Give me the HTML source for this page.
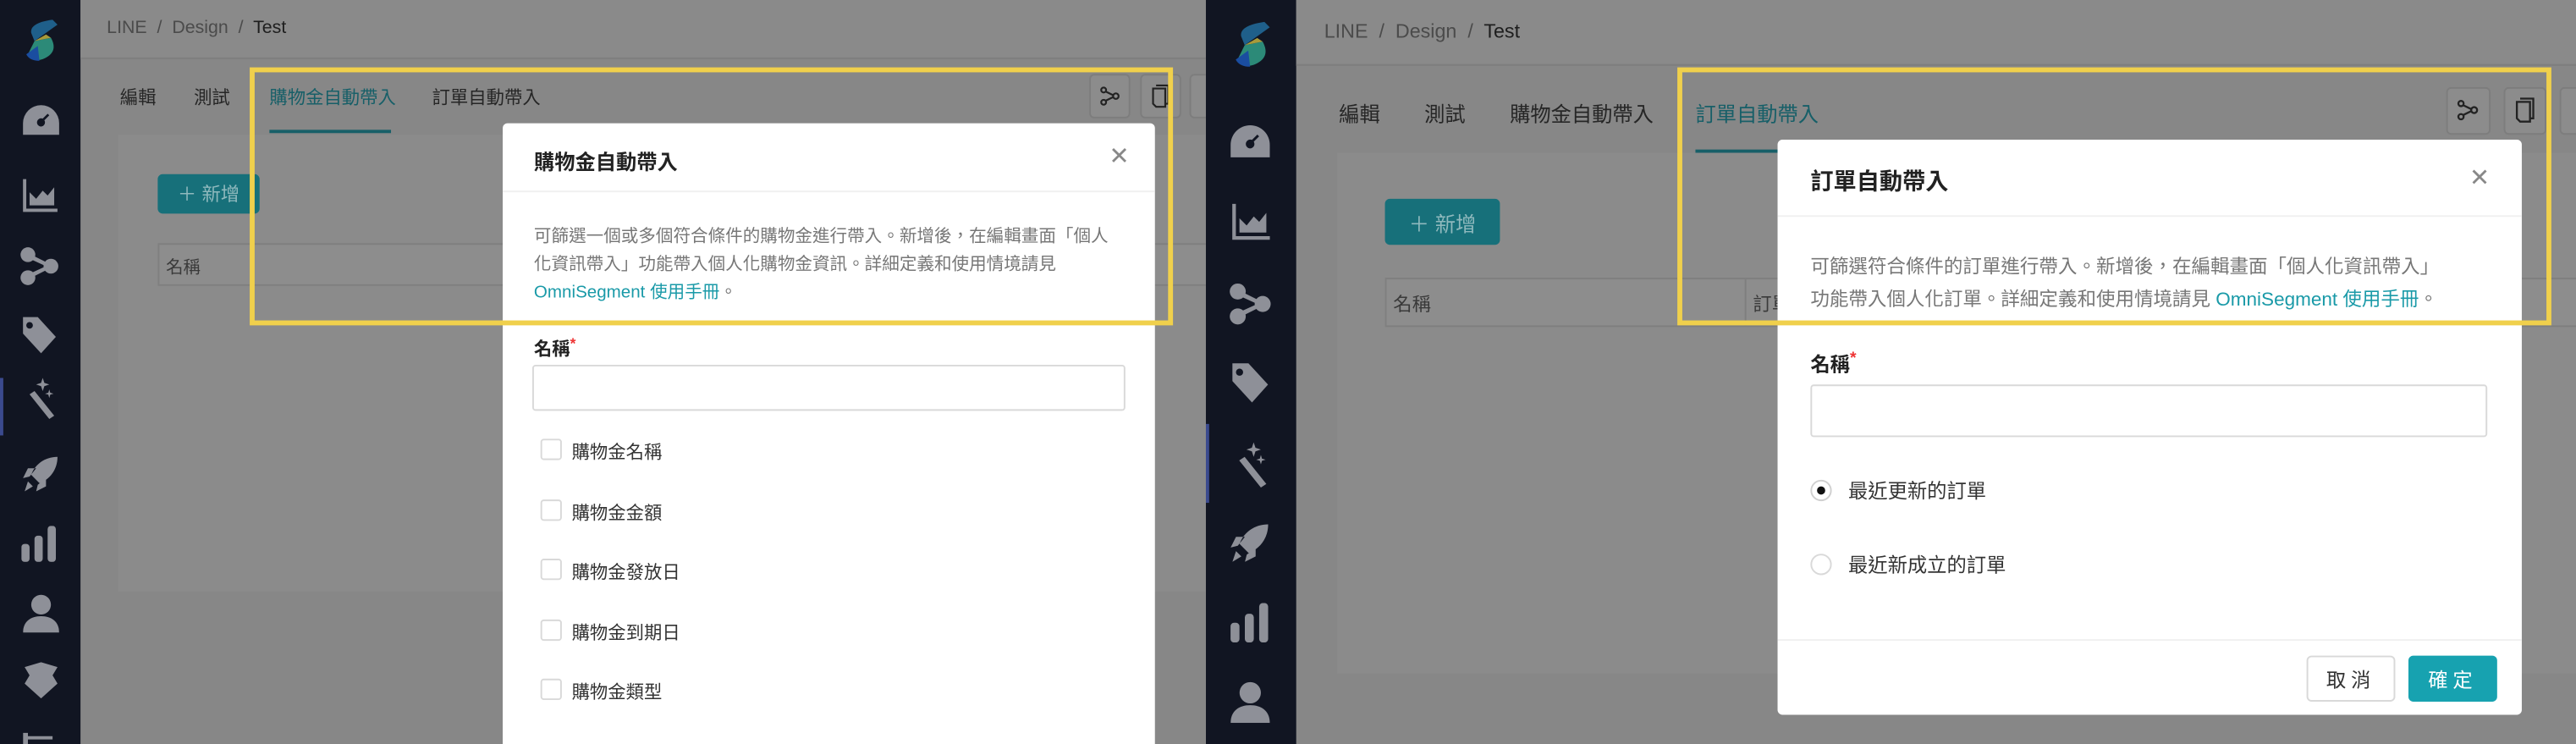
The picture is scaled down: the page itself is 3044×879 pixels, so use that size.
<!DOCTYPE html>
<html><head><meta charset="utf-8">
<style>
*{box-sizing:border-box;margin:0;padding:0}
html,body{width:3044px;height:879px;overflow:hidden;background:#888}
body{font-family:"Liberation Sans","Noto Sans CJK TC",sans-serif}
#s{position:absolute;left:0;top:0;width:1568px;height:453px;transform:scale(1.94133);transform-origin:0 0}
.a{position:absolute;white-space:nowrap}
.panel{position:absolute;top:0;height:453px;overflow:hidden;background:#878787}
.sb{position:absolute;left:0;top:0;bottom:0;background:#111522}
.hdr{position:absolute;top:0;right:0;background:#8a8a8a;border-bottom:1px solid #7e7e7e}
.card{position:absolute;background:#8b8b8b}
.btn{position:absolute;background:#17707a;border-radius:3px;color:#8fb9bd;display:flex;align-items:center;justify-content:center}
.th{position:absolute;background:#8d8d8d;border:1px solid #7f7f7f;color:#3a3a3a}
.ib{position:absolute;border:1px solid #7d7d7d;border-radius:3px;background:#8c8c8c}
.modal{position:absolute;background:#fff;border-radius:3px;overflow:hidden}
.yel{position:absolute;border:3px solid #f0d04c}
.ic{position:absolute;fill:#8e9098}
.cb{position:absolute;width:13px;height:13px;border:1px solid #d9d9d9;border-radius:2px;background:#fff}
</style></head><body>
<div id="s">

<!-- LEFT PANEL -->
<div class="panel" style="left:0;width:734px">
  <div class="sb" style="width:49px"></div>
  <div class="a" style="left:0;top:230px;width:2px;height:35px;background:#3b4a8e"></div>
  <svg class="a" style="left:14px;top:12px" width="22" height="26" viewBox="0 0 22 26"><path d="M18 0 L21 3 L7 13 L5 8 Q4 2 18 0Z" fill="#1f5f8a"/><path d="M7 13 L17 11 Q22 20 12 24 Q6 26 3 21Z" fill="#2c8a78"/><path d="M7 13 L14 9 L17 11Z" fill="#a89a3a"/><path d="M2 21 L9 16 L10 25 Q4 25 2 21Z" fill="#1a4da0"/></svg>
  <svg class="ic" style="left:13px;top:63px" width="24" height="20" viewBox="0 0 24 20"><path d="M12 1A11 11 0 0 0 1 12v7h22v-7A11 11 0 0 0 12 1zm0 13a2.5 2.5 0 1 1 1-4.8l3-3 1 1-3 3A2.5 2.5 0 0 1 12 14z"/></svg>
  <svg class="ic" style="left:13px;top:108px" width="22" height="22" viewBox="0 0 22 22"><path d="M1 1h2v18h19v2H1z"/><path d="M5 17V9l4 4 4-5 3 3 4-5v11z"/></svg>
  <svg class="ic" style="left:12px;top:150px" width="24" height="24" viewBox="0 0 24 24"><circle cx="5" cy="5" r="4.5"/><circle cx="19" cy="12" r="4.5"/><circle cx="5" cy="19" r="4.5"/><path d="M5 4l14 7v2L5 20v-3l11-5L5 7z"/></svg>
  <svg class="ic" style="left:13px;top:192px" width="22" height="24" viewBox="0 0 22 24"><path d="M1 1h9l11 12-9 10L1 11zm4 3a2 2 0 1 0 0.01 0z"/></svg>
  <svg class="ic" style="left:15px;top:230px" width="20" height="26" viewBox="0 0 20 26"><path d="M3 10l3-2 12 15-3 2z"/><path d="M11 0l1 3 3 1-3 1-1 3-1-3-3-1 3-1zM15 7l.6 2 2 .6-2 .6-.6 2-.6-2-2-.6 2-.6z"/></svg>
  <svg class="ic" style="left:13px;top:277px" width="23" height="23" viewBox="0 0 23 23"><path d="M22 1C14 1 8 6 6 12l5 5c6-2 11-8 11-16zM5 13l-4 1 3-6h5zM10 18l-1 4 6-3v-5zM4 16l3 3-5 3z"/></svg>
  <svg class="ic" style="left:13px;top:320px" width="22" height="22" viewBox="0 0 22 22"><rect x="0" y="11" width="5" height="11" rx="2"/><rect x="8" y="6" width="5" height="16" rx="2"/><rect x="16" y="0" width="5" height="22" rx="2"/></svg>
  <svg class="ic" style="left:14px;top:361px" width="22" height="24" viewBox="0 0 22 24"><circle cx="11" cy="7" r="6"/><path d="M0 24c0-7 5-10 11-10s11 3 11 10z"/></svg>
  <svg class="ic" style="left:13px;top:403px" width="24" height="22" viewBox="0 0 24 22"><path d="M2 3l10-3 10 3-3 5 3 5-10 9L2 13l3-5z"/></svg>
  <svg class="ic" style="left:14px;top:444px" width="20" height="10" viewBox="0 0 20 10"><path d="M0 2h3v8H0zM3 4h15v2H3z"/></svg>

  <div class="hdr" style="left:49px;height:36px"></div>
  <div class="a" style="left:65px;top:11px;font-size:11px;color:#4b4b4b">LINE&nbsp; /&nbsp; Design&nbsp; /&nbsp; <span style="color:#1e1e1e">Test</span></div>
  <div class="a" style="left:73px;top:51px;font-size:11px;color:#262626">編輯</div>
  <div class="a" style="left:118px;top:51px;font-size:11px;color:#262626">測試</div>
  <div class="a" style="left:164px;top:51px;font-size:11px;color:#175f68">購物金自動帶入</div>
  <div class="a" style="left:164px;top:79px;width:74px;height:2px;background:#175f68"></div>
  <div class="a" style="left:263px;top:51px;font-size:11px;color:#262626">訂單自動帶入</div>
  <div class="ib" style="left:663px;top:45px;width:25px;height:27px"></div>
  <svg class="a" style="left:669px;top:52px" width="13" height="13" viewBox="0 0 14 14" fill="none" stroke="#222" stroke-width="1.2"><circle cx="3" cy="3" r="1.6"/><circle cx="3" cy="11" r="1.6"/><circle cx="11" cy="7" r="1.8"/><path d="M4.3 4l5 2.4M4.3 10l5-2.4"/></svg>
  <div class="ib" style="left:694px;top:45px;width:25px;height:27px"></div>
  <svg class="a" style="left:700px;top:50px" width="13" height="17" viewBox="0 0 14 18" fill="none" stroke="#222" stroke-width="1.2"><path d="M4 2h8v12h-2M2 4h8v12H4L2 14z"/></svg>
  <div class="ib" style="left:724px;top:45px;width:25px;height:27px"></div>
  <div class="card" style="left:72px;top:82px;width:700px;height:278px"></div>
  <div class="btn" style="left:96px;top:106px;width:62px;height:24px;font-size:11.5px">＋ 新增</div>
  <div class="th" style="left:96px;top:148px;width:640px;height:26px"><span class="a" style="left:4px;top:6px;font-size:10.5px">名稱</span></div>

  <div class="modal" style="left:306px;top:75px;width:397px;height:390px">
    <div class="a" style="left:19px;top:13px;font-size:12.5px;font-weight:bold;color:#222">購物金自動帶入</div>
    <div class="a" style="left:369px;top:11px;font-size:15px;color:#888;font-weight:300">✕</div>
    <div class="a" style="left:0;top:41px;width:397px;height:1px;background:#f0f0f0"></div>
    <div class="a" style="left:19px;top:61px;width:360px;white-space:normal;font-size:10.6px;line-height:17px;color:#777">可篩選一個或多個符合條件的購物金進行帶入。新增後，在編輯畫面「個人化資訊帶入」功能帶入個人化購物金資訊。詳細定義和使用情境請見 <span style="color:#1a9aa8">OmniSegment 使用手冊</span>。</div>
    <div class="a" style="left:19px;top:129px;font-size:11px;font-weight:bold;color:#222">名稱<span style="color:#e33;font-size:9px;vertical-align:top">*</span></div>
    <div class="a" style="left:18px;top:147px;width:361px;height:28px;border:1px solid #d9d9d9;border-radius:2px"></div>
    <div class="cb" style="left:23px;top:192px"></div><div class="a" style="left:42px;top:192px;font-size:11px;color:#333">購物金名稱</div>
    <div class="cb" style="left:23px;top:229px"></div><div class="a" style="left:42px;top:229px;font-size:11px;color:#333">購物金金額</div>
    <div class="cb" style="left:23px;top:265px"></div><div class="a" style="left:42px;top:265px;font-size:11px;color:#333">購物金發放日</div>
    <div class="cb" style="left:23px;top:302px"></div><div class="a" style="left:42px;top:302px;font-size:11px;color:#333">購物金到期日</div>
    <div class="cb" style="left:23px;top:338px"></div><div class="a" style="left:42px;top:338px;font-size:11px;color:#333">購物金類型</div>
  </div>
  <div class="yel" style="left:152px;top:41px;width:562px;height:157px"></div>
</div>

<!-- RIGHT PANEL -->
<div class="panel" style="left:734px;width:834px">
  <div class="sb" style="width:55px"></div>
  <div class="a" style="left:0;top:258px;width:2px;height:48px;background:#3b4a8e"></div>
  <svg class="a" style="left:16px;top:13px" width="24" height="29" viewBox="0 0 22 26"><path d="M18 0 L21 3 L7 13 L5 8 Q4 2 18 0Z" fill="#1f5f8a"/><path d="M7 13 L17 11 Q22 20 12 24 Q6 26 3 21Z" fill="#2c8a78"/><path d="M7 13 L14 9 L17 11Z" fill="#a89a3a"/><path d="M2 21 L9 16 L10 25 Q4 25 2 21Z" fill="#1a4da0"/></svg>
  <svg class="ic" style="left:14px;top:75px" width="26" height="22" viewBox="0 0 24 20"><path d="M12 1A11 11 0 0 0 1 12v7h22v-7A11 11 0 0 0 12 1zm0 13a2.5 2.5 0 1 1 1-4.8l3-3 1 1-3 3A2.5 2.5 0 0 1 12 14z"/></svg>
  <svg class="ic" style="left:15px;top:123px" width="24" height="24" viewBox="0 0 22 22"><path d="M1 1h2v18h19v2H1z"/><path d="M5 17V9l4 4 4-5 3 3 4-5v11z"/></svg>
  <svg class="ic" style="left:14px;top:172px" width="26" height="26" viewBox="0 0 24 24"><circle cx="5" cy="5" r="4.5"/><circle cx="19" cy="12" r="4.5"/><circle cx="5" cy="19" r="4.5"/><path d="M5 4l14 7v2L5 20v-3l11-5L5 7z"/></svg>
  <svg class="ic" style="left:15px;top:220px" width="24" height="26" viewBox="0 0 22 24"><path d="M1 1h9l11 12-9 10L1 11zm4 3a2 2 0 1 0 0.01 0z"/></svg>
  <svg class="ic" style="left:17px;top:269px" width="22" height="29" viewBox="0 0 20 26"><path d="M3 10l3-2 12 15-3 2z"/><path d="M11 0l1 3 3 1-3 1-1 3-1-3-3-1 3-1zM15 7l.6 2 2 .6-2 .6-.6 2-.6-2-2-.6 2-.6z"/></svg>
  <svg class="ic" style="left:14px;top:318px" width="25" height="25" viewBox="0 0 23 23"><path d="M22 1C14 1 8 6 6 12l5 5c6-2 11-8 11-16zM5 13l-4 1 3-6h5zM10 18l-1 4 6-3v-5zM4 16l3 3-5 3z"/></svg>
  <svg class="ic" style="left:15px;top:367px" width="24" height="24" viewBox="0 0 22 22"><rect x="0" y="11" width="5" height="11" rx="2"/><rect x="8" y="6" width="5" height="16" rx="2"/><rect x="16" y="0" width="5" height="22" rx="2"/></svg>
  <svg class="ic" style="left:15px;top:414px" width="24" height="26" viewBox="0 0 22 24"><circle cx="11" cy="7" r="6"/><path d="M0 24c0-7 5-10 11-10s11 3 11 10z"/></svg>

  <div class="hdr" style="left:55px;height:40px"></div>
  <div class="a" style="left:72px;top:12px;font-size:12px;color:#4b4b4b">LINE&nbsp; /&nbsp; Design&nbsp; /&nbsp; <span style="color:#1e1e1e">Test</span></div>
  <div class="a" style="left:81px;top:59px;font-size:12.5px;color:#262626">編輯</div>
  <div class="a" style="left:133px;top:59px;font-size:12.5px;color:#262626">測試</div>
  <div class="a" style="left:185px;top:59px;font-size:12.5px;color:#262626">購物金自動帶入</div>
  <div class="a" style="left:298px;top:59px;font-size:12.5px;color:#175f68">訂單自動帶入</div>
  <div class="a" style="left:298px;top:91px;width:76px;height:2px;background:#175f68"></div>
  <div class="ib" style="left:755px;top:53px;width:27px;height:29px"></div>
  <svg class="a" style="left:761px;top:60px" width="14" height="14" viewBox="0 0 14 14" fill="none" stroke="#222" stroke-width="1.2"><circle cx="3" cy="3" r="1.6"/><circle cx="3" cy="11" r="1.6"/><circle cx="11" cy="7" r="1.8"/><path d="M4.3 4l5 2.4M4.3 10l5-2.4"/></svg>
  <div class="ib" style="left:790px;top:53px;width:26px;height:29px"></div>
  <svg class="a" style="left:796px;top:58px" width="14" height="18" viewBox="0 0 14 18" fill="none" stroke="#222" stroke-width="1.2"><path d="M4 2h8v12h-2M2 4h8v12H4L2 14z"/></svg>
  <div class="ib" style="left:824px;top:53px;width:26px;height:29px"></div>
  <div class="card" style="left:80px;top:93px;width:760px;height:317px"></div>
  <div class="btn" style="left:109px;top:121px;width:70px;height:28px;font-size:12.5px">＋ 新增</div>
  <div class="th" style="left:109px;top:169px;width:740px;height:30px"><span class="a" style="left:4px;top:7px;font-size:11.5px">名稱</span><span class="a" style="left:218px;top:0;width:1px;height:28px;background:#7f7f7f"></span><span class="a" style="left:223px;top:7px;font-size:11.5px">訂單</span></div>

  <div class="modal" style="left:348px;top:85px;width:453px;height:350px">
    <div class="a" style="left:20px;top:15px;font-size:14px;font-weight:bold;color:#222">訂單自動帶入</div>
    <div class="a" style="left:421px;top:14px;font-size:15px;color:#888">✕</div>
    <div class="a" style="left:0;top:46px;width:453px;height:1px;background:#f0f0f0"></div>
    <div class="a" style="left:20px;top:68px;font-size:11.6px;line-height:20px;color:#777">可篩選符合條件的訂單進行帶入。新增後，在編輯畫面「個人化資訊帶入」<br>功能帶入個人化訂單。詳細定義和使用情境請見 <span style="color:#1a9aa8">OmniSegment 使用手冊</span>。</div>
    <div class="a" style="left:20px;top:128px;font-size:12px;font-weight:bold;color:#222">名稱<span style="color:#e33;font-size:10px;vertical-align:top">*</span></div>
    <div class="a" style="left:20px;top:149px;width:412px;height:32px;border:1px solid #d9d9d9;border-radius:2px"></div>
    <div class="a" style="left:20px;top:207px;width:13px;height:13px;border:1px solid #d0d0d0;border-radius:50%;background:#fff"><div class="a" style="left:3px;top:3px;width:5px;height:5px;border-radius:50%;background:#111"></div></div>
    <div class="a" style="left:43px;top:205px;font-size:12px;color:#333">最近更新的訂單</div>
    <div class="a" style="left:20px;top:252px;width:13px;height:13px;border:1px solid #d9d9d9;border-radius:50%;background:#fff"></div>
    <div class="a" style="left:43px;top:250px;font-size:12px;color:#333">最近新成立的訂單</div>
    <div class="a" style="left:0;top:304px;width:453px;height:1px;background:#f0f0f0"></div>
    <div class="a" style="left:322px;top:314px;width:54px;height:28px;border:1px solid #d9d9d9;border-radius:3px;font-size:12px;color:#333;display:flex;align-items:center;justify-content:center;letter-spacing:3px">取消</div>
    <div class="a" style="left:384px;top:314px;width:54px;height:28px;border-radius:3px;background:#17a2b0;font-size:12px;color:#fff;display:flex;align-items:center;justify-content:center;letter-spacing:3px">確定</div>
  </div>
  <div class="yel" style="left:287px;top:41px;width:532px;height:157px"></div>
</div>
</div>
</body></html>
